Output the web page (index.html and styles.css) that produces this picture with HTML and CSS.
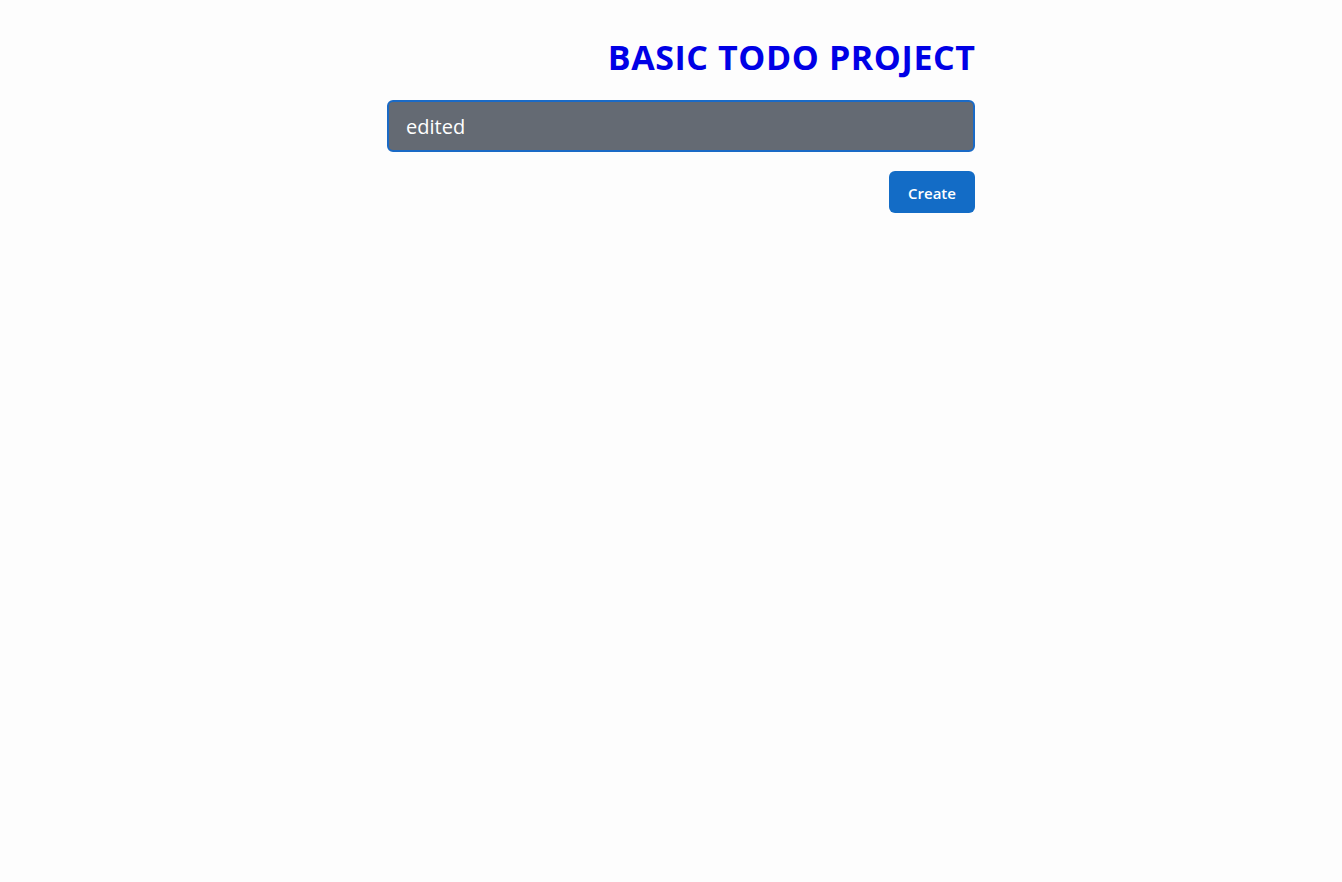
FILE: index.html
```html
<!DOCTYPE html>
<html lang="en">
<head>
<meta charset="utf-8">
<title>Basic Todo Project</title>
<link rel="stylesheet" href="styles.css">
</head>
<body>
<main class="app">
  <h1 class="title">BASIC TODO PROJECT</h1>
  <form class="todo-form">
    <input class="todo-input" type="text" value="edited">
    <div class="actions">
      <button class="btn-create" type="button">Create</button>
    </div>
  </form>
</main>
</body>
</html>
```
FILE: styles.css
```css
html, body {
  margin: 0;
  padding: 0;
  background: #fdfdfd;
}
body {
  font-family: "Open Sans", "Noto Sans", sans-serif;
}
.app {
  width: 588px;
  margin-left: 387px;
  padding-top: 35px;
}
.title {
  margin: 0;
  text-align: right;
  color: #0000e6;
  font-size: 34px;
  font-weight: 700;
  line-height: 44px;
  letter-spacing: 0.6px;
  margin-right: -0.6px;
}
.todo-form {
  margin-top: 21px;
  display: flex;
  flex-direction: column;
}
.todo-input {
  box-sizing: border-box;
  width: 100%;
  height: 52px;
  border: 2px solid #1a6ac6;
  border-radius: 6px;
  background: #646a73;
  color: #ffffff;
  font-family: "Open Sans", "Noto Sans", sans-serif;
  font-size: 20px;
  padding: 0 17px;
  outline: none;
}
.actions {
  display: flex;
  justify-content: flex-end;
  margin-top: 19px;
}
.btn-create {
  width: 86px;
  height: 42px;
  border: none;
  border-radius: 6px;
  background: #136cc6;
  color: #ffffff;
  font-family: "Open Sans", "Noto Sans", sans-serif;
  font-size: 15px;
  font-weight: 600;
  padding: 2px 0 0;
  cursor: pointer;
}
```
